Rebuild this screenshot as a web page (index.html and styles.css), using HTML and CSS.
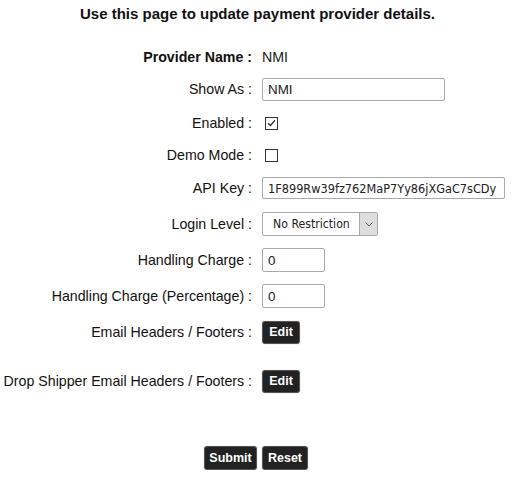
FILE: index.html
```html
<!DOCTYPE html>
<html>
<head>
<meta charset="utf-8">
<link rel="stylesheet" href="styles.css">
</head>
<body>
<div class="page">
  <h1 class="title">Use this page to update payment provider details.</h1>
  <div class="form">
    <div class="row r-provider">
      <div class="label bold">Provider Name :</div>
      <div class="value"><span class="static">NMI</span></div>
    </div>
    <div class="row r-show">
      <div class="label">Show As :</div>
      <div class="value"><input class="text w-show" type="text" value="NMI"></div>
    </div>
    <div class="row r-enabled">
      <div class="label">Enabled :</div>
      <div class="value"><span class="check"><svg width="9" height="8" viewBox="0 0 9 8"><path d="M1 4.2 L3.4 6.5 L8 1.2" fill="none" stroke="#333" stroke-width="1.3"/></svg></span></div>
    </div>
    <div class="row r-demo">
      <div class="label">Demo Mode :</div>
      <div class="value"><span class="check"></span></div>
    </div>
    <div class="row r-api">
      <div class="label">API Key :</div>
      <div class="value"><input class="text w-api mono" type="text" value="1F899Rw39fz762MaP7Yy86jXGaC7sCDy"></div>
    </div>
    <div class="row r-login">
      <div class="label">Login Level :</div>
      <div class="value">
        <div class="select">
          <span class="select-text">No Restriction</span>
          <span class="select-arrow"><svg width="8" height="5" viewBox="0 0 8 5"><path d="M0.5 0.5 L4 4 L7.5 0.5" fill="none" stroke="#555" stroke-width="1"/></svg></span>
        </div>
      </div>
    </div>
    <div class="row r-hc">
      <div class="label">Handling Charge :</div>
      <div class="value"><input class="text w-num tall" type="text" value="0"></div>
    </div>
    <div class="row r-hcp">
      <div class="label">Handling Charge (Percentage) :</div>
      <div class="value"><input class="text w-num tall" type="text" value="0"></div>
    </div>
    <div class="row r-email">
      <div class="label">Email Headers / Footers :</div>
      <div class="value"><button class="btn btn-edit" type="button">Edit</button></div>
    </div>
    <div class="row r-drop">
      <div class="label">Drop Shipper Email Headers / Footers :</div>
      <div class="value"><button class="btn btn-edit" type="button">Edit</button></div>
    </div>
  </div>
  <div class="actions">
    <button class="btn btn-submit" type="button">Submit</button>
    <button class="btn btn-reset" type="button">Reset</button>
  </div>
</div>
</body>
</html>
```
FILE: styles.css
```css
html, body {
  margin: 0;
  padding: 0;
  background: #fff;
}
body {
  font-family: "Liberation Sans", Arial, sans-serif;
  color: #111;
  font-size: 14.2px;
}
.page {
  width: 515px;
  padding-top: 3px;
}
.title {
  margin: 0;
  height: 21px;
  line-height: 21px;
  font-size: 15px;
  font-weight: bold;
  text-align: center;
  color: #111;
}
.form {
  display: flex;
  flex-direction: column;
  padding-top: 21px;
}
.row {
  display: flex;
  align-items: center;
  height: 24px;
}
.label {
  width: 252px;
  text-align: right;
  flex: none;
}
.bold {
  font-weight: bold;
}
.value {
  margin-left: 10px;
  display: flex;
  align-items: center;
}
.static {
  color: #222;
}
.r-show { margin-top: 8px; }
.r-enabled { margin-top: 10px; }
.r-demo { margin-top: 8px; }
.r-api { margin-top: 9px; }
.r-login { margin-top: 12px; }
.r-hc { margin-top: 12px; }
.r-hcp { margin-top: 12px; }
.r-email { margin-top: 12px; }
.r-drop { margin-top: 25px; }

.text {
  box-sizing: border-box;
  height: 23px;
  border: 1px solid #a9a9a9;
  border-radius: 2px;
  padding: 0 5px;
  font-family: "Liberation Sans", Arial, sans-serif;
  font-size: 13.4px;
  color: #222;
  background: #fff;
  margin: 0;
  outline: none;
}
.tall { height: 24px; }
.w-show { width: 183px; }
.w-api { width: 243px; height: 22px; }
.w-num { width: 63px; }
.mono {
  font-family: "DejaVu Sans Condensed", "DejaVu Sans", sans-serif;
  font-size: 12.6px;
  padding: 0 5px;
}
.check {
  box-sizing: border-box;
  width: 13px;
  height: 13px;
  margin-left: 3px;
  border: 1px solid #333;
  display: flex;
  align-items: center;
  justify-content: center;
  background: #fff;
}
.select {
  box-sizing: border-box;
  width: 116px;
  height: 24px;
  border: 1px solid #a9a9a9;
  border-radius: 2px;
  display: flex;
  align-items: stretch;
  background: #fff;
}
.select-text {
  flex: 1;
  display: flex;
  align-items: center;
  padding-left: 10px;
  font-family: "DejaVu Sans Condensed", "DejaVu Sans", sans-serif;
  font-size: 12.2px;
  color: #222;
}
.select-arrow {
  width: 17px;
  background: #dddddd;
  border-left: 1px solid #a9a9a9;
  display: flex;
  align-items: center;
  justify-content: center;
}
.btn {
  box-sizing: border-box;
  height: 23px;
  background: #222;
  color: #fff;
  border: 1px solid #555;
  border-radius: 3px;
  font-family: "Liberation Sans", Arial, sans-serif;
  font-weight: bold;
  font-size: 12.5px;
  padding: 0;
  margin: 0;
  box-shadow: 0 0 1px #999;
}
.btn-edit { width: 38px; }
.actions {
  display: flex;
  justify-content: center;
  gap: 5px;
  margin-top: 53px;
  padding-right: 3px;
}
.btn-submit { width: 53px; height: 24px; }
.btn-reset { width: 46px; height: 24px; }
```
